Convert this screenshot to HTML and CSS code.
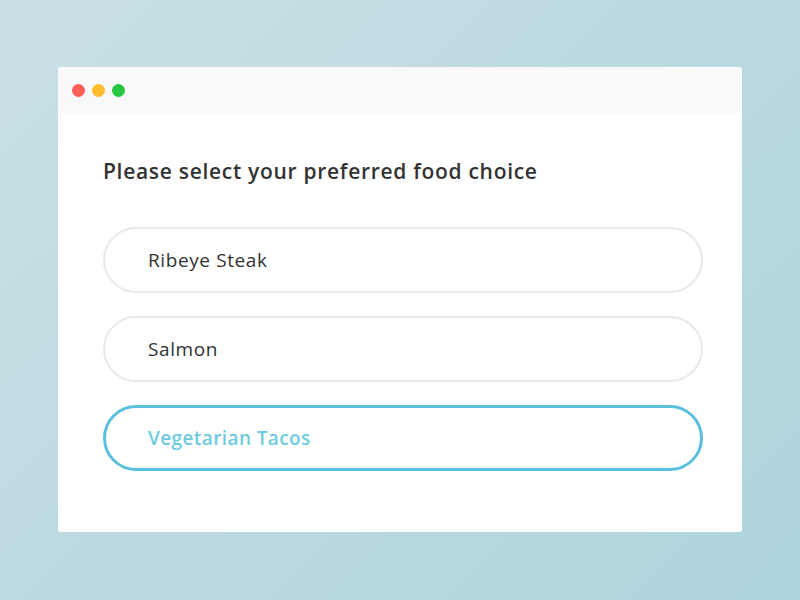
FILE: index.html
```html
<!DOCTYPE html>
<html>
  <head>
    <title>Food choice</title>
    <link rel="stylesheet" href="styles.css">
  </head>
  <body>
    <div class="window">
      <div class="titlebar">
        <span class="dot red"></span>
        <span class="dot yellow"></span>
        <span class="dot green"></span>
      </div>
      <div class="content">
        <h1>Please select your preferred food choice</h1>
        <ul class="options">
          <li class="option">Ribeye Steak</li>
          <li class="option">Salmon</li>
          <li class="option selected">Vegetarian Tacos</li>
        </ul>
      </div>
    </div>
  </body>
</html>
```

FILE: styles.css
```css
html, body {
  margin: 0;
  height: 100%;
}

body {
  background: linear-gradient(135deg, #c9e0e6 0%, #bcd9e0 50%, #aed4dd 100%);
  font-family: "Open Sans", Lato, sans-serif;
  padding: 67px 58px 0 58px;
  box-sizing: border-box;
}

.window {
  width: 684px;
  height: 465px;
  background-color: #fff;
  border-radius: 3px;
  overflow: hidden;
}

.titlebar {
  height: 46px;
  background-color: #f9f9f9;
  display: flex;
  align-items: center;
  gap: 7px;
  padding-left: 14px;
}

.dot {
  width: 13px;
  height: 13px;
  border-radius: 50%;
}

.dot.red { background-color: #fd5f57; }
.dot.yellow { background-color: #febb2e; }
.dot.green { background-color: #27c83f; }

.content {
  padding: 44px 39px 0 45px;
}

h1 {
  margin: 0 0 42px 0;
  font-size: 21px;
  font-weight: 600;
  color: #333;
  line-height: 28px;
  letter-spacing: 0.7px;
}

.options {
  list-style-type: none;
  margin: 0;
  padding: 0;
  display: flex;
  flex-direction: column;
  gap: 23px;
}

.option {
  height: 66px;
  box-sizing: border-box;
  border: 2px solid #e8e8e8;
  border-radius: 33px;
  padding-left: 43px;
  display: flex;
  align-items: center;
  font-size: 19px;
  letter-spacing: 0.6px;
  color: #333;
}

.option.selected {
  border: 3px solid #5bc0dc;
  padding-left: 42px;
  color: #6ecbe0;
  font-weight: 600;
  letter-spacing: 0.4px;
}
```
